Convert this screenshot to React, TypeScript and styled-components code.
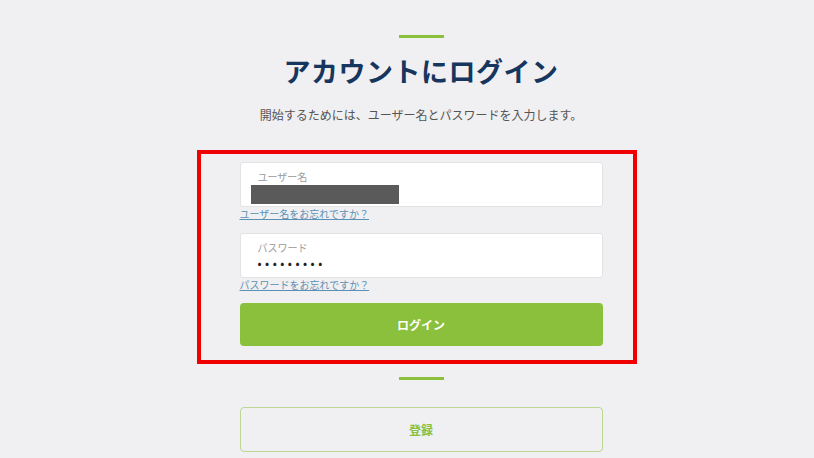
import React from 'react';
import styled, { createGlobalStyle } from 'styled-components';

const GlobalStyle = createGlobalStyle`
  html, body {
    margin: 0;
    padding: 0;
    background: #f0f0f2;
    font-family: "Noto Sans CJK JP", "Noto Sans", sans-serif;
  }
`;

const green = '#8bc03c';

const Page = styled.div`
  width: 814px;
  height: 458px;
  overflow: hidden;
  display: flex;
  flex-direction: column;
  align-items: center;
  padding-top: 35px;
  padding-left: 28px;
  box-sizing: border-box;
`;

const Rule = styled.div<{ $top?: number }>`
  width: 45px;
  height: 3px;
  background: ${green};
  margin-top: ${p => p.$top ?? 0}px;
`;

const Title = styled.h1`
  margin: 13px 0 0;
  font-size: 27px;
  line-height: 40px;
  font-weight: 700;
  color: #17365d;
  letter-spacing: 0.5px;
`;

const Subtitle = styled.p`
  margin: 15px 0 0;
  font-size: 12px;
  line-height: 18px;
  color: #555;
`;

const Frame = styled.div`
  margin-top: 26px;
  margin-left: -9px;
  width: 440px;
  border: 4px solid #f00000;
  box-sizing: border-box;
  padding: 8px 30px 14px 39px;
  display: flex;
  flex-direction: column;
`;

const Field = styled.div<{ $top?: number }>`
  height: 45px;
  background: #fff;
  border: 1px solid #e3e3e6;
  border-radius: 3px;
  box-sizing: border-box;
  padding: 6px 0 0 17px;
  margin-top: ${p => p.$top ?? 0}px;
  position: relative;
`;

const Label = styled.div`
  font-size: 10px;
  line-height: 16px;
  color: #9a9a9a;
`;

const Masked = styled.div`
  position: absolute;
  left: 10px;
  top: 22px;
  width: 148px;
  height: 19px;
  background: #5a5a5a;
`;

const Dots = styled.div`
  font-size: 12px;
  line-height: 12px;
  margin-top: 1px;
  color: #222;
  letter-spacing: 3.5px;
`;

const Forgot = styled.a`
  font-size: 10px;
  line-height: 14px;
  color: #5b90b5;
  text-decoration: underline;
  align-self: flex-start;
  cursor: pointer;
`;

const Button = styled.button<{ $outline?: boolean }>`
  width: 363px;
  height: ${p => (p.$outline ? 45 : 43)}px;
  border-radius: 4px;
  font-family: inherit;
  font-size: 12px;
  font-weight: 700;
  cursor: pointer;
  background: ${p => (p.$outline ? 'transparent' : green)};
  color: ${p => (p.$outline ? green : '#fff')};
  border: ${p => (p.$outline ? '1.5px solid #bcd694' : 'none')};
`;

const LoginButton = styled(Button)`
  margin-top: 11px;
`;

const RegisterButton = styled(Button)`
  margin-top: 27px;
`;

export default function App() {
  return (
    <>
      <GlobalStyle />
      <Page>
        <Rule />
        <Title>アカウントにログイン</Title>
        <Subtitle>開始するためには、ユーザー名とパスワードを入力します。</Subtitle>
        <Frame>
          <Field>
            <Label>ユーザー名</Label>
            <Masked />
          </Field>
          <Forgot>ユーザー名をお忘れですか？</Forgot>
          <Field $top={12}>
            <Label>パスワード</Label>
            <Dots>•••••••••</Dots>
          </Field>
          <Forgot>パスワードをお忘れですか？</Forgot>
          <LoginButton>ログイン</LoginButton>
        </Frame>
        <Rule $top={13} />
        <RegisterButton $outline>登録</RegisterButton>
      </Page>
    </>
  );
}
